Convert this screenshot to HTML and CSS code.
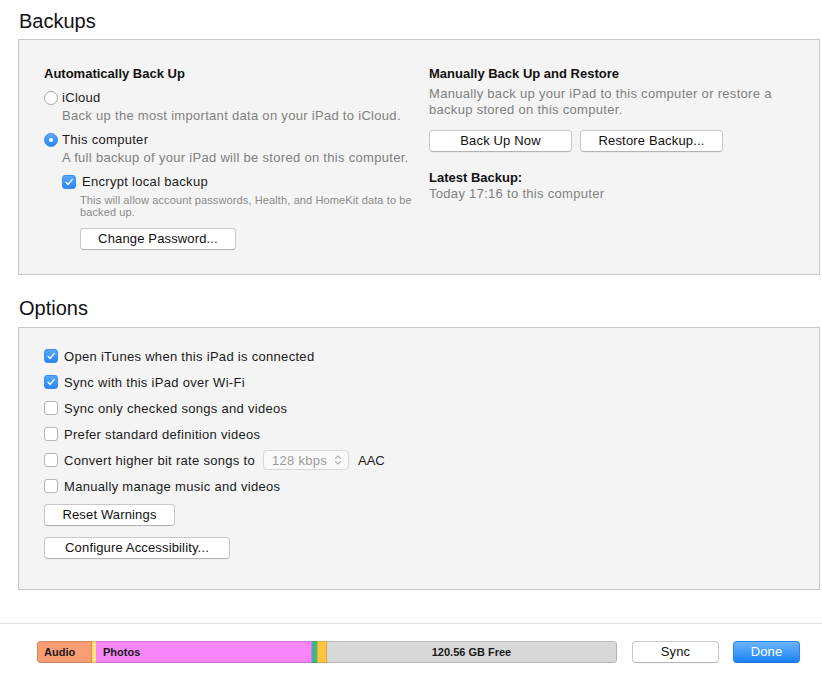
FILE: index.html
```html
<!DOCTYPE html>
<html>
<head>
<meta charset="utf-8">
<link rel="stylesheet" href="styles.css">
</head>
<body>
<div class="page">
  <h2 class="title title-first">Backups</h2>
  <div class="box box-backups">
    <div class="col col-left">
      <div class="bold">Automatically Back Up</div>
      <div class="radio-row">
        <span class="radio"></span><span>iCloud</span>
      </div>
      <div class="desc">Back up the most important data on your iPad to iCloud.</div>
      <div class="radio-row gap">
        <span class="radio on"></span><span>This computer</span>
      </div>
      <div class="desc">A full backup of your iPad will be stored on this computer.</div>
      <div class="sub">
        <div class="check-row">
          <span class="check on"><svg viewBox="0 0 14 14" width="14" height="14"><path d="M3.6 7.4 L6 9.8 L10.6 4.2" fill="none" stroke="#fff" stroke-width="1.6" stroke-linecap="round" stroke-linejoin="round"/></svg></span>
          <span>Encrypt local backup</span>
        </div>
        <div class="small">This will allow account passwords, Health, and HomeKit data to be backed up.</div>
        <button class="btn btn-change">Change Password...</button>
      </div>
    </div>
    <div class="col col-right">
      <div class="bold">Manually Back Up and Restore</div>
      <div class="gray para">Manually back up your iPad to this computer or restore a backup stored on this computer.</div>
      <div class="btn-row">
        <button class="btn btn-wide">Back Up Now</button>
        <button class="btn btn-wide">Restore Backup...</button>
      </div>
      <div class="bold latest">Latest Backup:</div>
      <div class="gray line16">Today 17:16 to this computer</div>
    </div>
  </div>

  <h2 class="title title-second">Options</h2>
  <div class="box box-options">
    <div class="opt"><span class="check on"><svg viewBox="0 0 14 14" width="14" height="14"><path d="M3.6 7.4 L6 9.8 L10.6 4.2" fill="none" stroke="#fff" stroke-width="1.6" stroke-linecap="round" stroke-linejoin="round"/></svg></span><span>Open iTunes when this iPad is connected</span></div>
    <div class="opt"><span class="check on"><svg viewBox="0 0 14 14" width="14" height="14"><path d="M3.6 7.4 L6 9.8 L10.6 4.2" fill="none" stroke="#fff" stroke-width="1.6" stroke-linecap="round" stroke-linejoin="round"/></svg></span><span>Sync with this iPad over Wi-Fi</span></div>
    <div class="opt"><span class="check"></span><span>Sync only checked songs and videos</span></div>
    <div class="opt"><span class="check"></span><span>Prefer standard definition videos</span></div>
    <div class="opt"><span class="check"></span><span>Convert higher bit rate songs to</span>
      <span class="popup"><span>128 kbps</span><svg class="updown" viewBox="0 0 8 12" width="8" height="12"><path d="M1.5 4.5 L4 2 L6.5 4.5 M1.5 7.5 L4 10 L6.5 7.5" fill="none" stroke="#b0b0b0" stroke-width="1.1" stroke-linecap="round" stroke-linejoin="round"/></svg></span>
      <span class="aac">AAC</span></div>
    <div class="opt"><span class="check"></span><span>Manually manage music and videos</span></div>
    <button class="btn btn-reset">Reset Warnings</button>
    <button class="btn btn-config">Configure Accessibility...</button>
  </div>

  <div class="footer">
    <div class="storage">
      <div class="seg seg-audio">Audio</div>
      <div class="seg seg-y1"></div>
      <div class="seg seg-photos">Photos</div>
      <div class="seg seg-green"></div>
      <div class="seg seg-orange"></div>
      <div class="seg seg-free">120.56 GB Free</div>
    </div>
    <button class="btn btn-sync">Sync</button>
    <button class="btn btn-done">Done</button>
  </div>
</div>
</body>
</html>
```

FILE: styles.css
```css
* { box-sizing: border-box; }
html, body {
  margin: 0;
  padding: 0;
  background: #ffffff;
}
body {
  font-family: "Liberation Sans", Arial, sans-serif;
  font-size: 13px;
  letter-spacing: 0.3px;
  color: #1a1a1a;
  width: 822px;
  height: 675px;
  overflow: hidden;
}
.page {
  display: flex;
  flex-direction: column;
}
.title {
  font-size: 20px;
  font-weight: normal;
  letter-spacing: 0;
  margin: 0 0 0 19px;
  line-height: 24px;
  color: #111;
}
.title-first { margin-top: 9px; height: 30px; }
.title-second { margin-top: 21px; height: 31px; }
.box {
  margin-left: 18px;
  width: 802px;
  background: #f4f4f4;
  border: 1px solid #c6c6c6;
}
.box-backups {
  height: 236px;
  display: flex;
  padding: 25px 0 0 25px;
}
.col-left { width: 385px; }
.col-right { width: 380px; }
.bold {
  font-weight: bold;
  letter-spacing: 0;
  line-height: 18px;
  color: #111;
}
.radio-row, .check-row {
  display: flex;
  align-items: center;
  line-height: 18px;
  margin-top: 6px;
}
.radio {
  width: 14px;
  height: 14px;
  border-radius: 50%;
  border: 1px solid #a8a8a8;
  background: #fff;
  margin-right: 4px;
  position: relative;
  flex: none;
}
.radio.on {
  background: linear-gradient(#5aa8fb, #2a86f5);
  border-color: #3a8ef0;
}
.radio.on::after {
  content: "";
  position: absolute;
  width: 4px;
  height: 4px;
  border-radius: 50%;
  background: #fff;
  left: 4px;
  top: 4px;
}
.desc {
  color: #808080;
  line-height: 18px;
  padding-left: 18px;
}
.sub {
  padding-left: 18px;
}
.check {
  width: 14px;
  height: 14px;
  border-radius: 3px;
  border: 1px solid #b5b5b5;
  background: #fff;
  margin-right: 6px;
  flex: none;
  display: inline-flex;
  align-items: center;
  justify-content: center;
  overflow: hidden;
}
.check svg { display: block; }
.check.on {
  background: linear-gradient(#5aa8fb, #2a86f5);
  border-color: #3a8ef0;
}
.small {
  font-size: 11px;
  letter-spacing: 0.12px;
  line-height: 12px;
  color: #8a8a8a;
  margin-top: 3px;
  padding-left: 18px;
  width: 352px;
}
.btn {
  font-family: "Liberation Sans", Arial, sans-serif;
  font-size: 13px;
  letter-spacing: 0.15px;
  color: #111;
  background: #ffffff;
  border: 1px solid #c8c8c8;
  border-bottom-color: #b4b4b4;
  border-radius: 4px;
  height: 22px;
  padding: 0;
  line-height: 20px;
  box-shadow: 0 0.5px 0.5px rgba(0,0,0,0.06);
}
.btn-change {
  width: 156px;
  margin-left: 18px;
  margin-top: 10px;
}
.gray { color: #808080; }
.para {
  line-height: 16px;
  margin-top: 3px;
  width: 375px;
}
.btn-row {
  display: flex;
  gap: 8px;
  margin-top: 12px;
}
.btn-wide { width: 143px; }
.latest { line-height: 16px; margin-top: 18px; }
.line16 { line-height: 16px; }

.box-options {
  height: 263px;
  display: flex;
  flex-direction: column;
  align-items: flex-start;
  padding: 15px 0 0 25px;
}
.opt {
  display: flex;
  align-items: center;
  height: 26px;
}
.opt .check { margin-right: 6px; }
.popup {
  display: inline-flex;
  align-items: center;
  justify-content: space-between;
  width: 86px;
  height: 20px;
  margin-left: 8px;
  padding: 0 6px 0 8px;
  border: 1px solid #d8d8d8;
  border-radius: 4px;
  background: #f9f9f9;
  color: #9a9a9a;
}
.updown { display: block; }
.aac { margin-left: 9px; letter-spacing: 0; }
.btn-reset { width: 131px; margin-top: 5px; }
.btn-config { width: 186px; margin-top: 11px; }

.footer {
  margin-top: 33px;
  border-top: 1px solid #e2e2e2;
  height: 52px;
  display: flex;
  align-items: flex-start;
  padding: 17px 0 0 37px;
}
.storage {
  display: flex;
  width: 580px;
  height: 22px;
  border-radius: 3px;
  overflow: hidden;
  font-size: 11px;
  font-weight: bold;
  letter-spacing: 0;
  color: #1a1a1a;
}
.seg {
  height: 100%;
  line-height: 20px;
  border-top: 1px solid rgba(0,0,0,0.12);
  border-bottom: 1px solid rgba(0,0,0,0.16);
}
.seg-audio {
  width: 55px;
  background: #fa9d73;
  padding-left: 6px;
  border-left: 1px solid rgba(0,0,0,0.15);
  border-right: 1px solid rgba(0,0,0,0.12);
  border-radius: 3px 0 0 3px;
}
.seg-y1 { width: 4px; background: #fde57a; }
.seg-photos {
  width: 216px;
  background: #f886f8;
  padding-left: 7px;
  border-right: 1px solid rgba(0,0,0,0.12);
}
.seg-green { width: 5px; background: #3bb98a; }
.seg-orange {
  width: 10px;
  background: #fdc43f;
  border-left: 1px solid rgba(0,0,0,0.1);
  border-right: 1px solid rgba(0,0,0,0.14);
}
.seg-free {
  flex: 1;
  background: #d8d8d8;
  text-align: center;
  border-right: 1px solid rgba(0,0,0,0.18);
  border-radius: 0 3px 3px 0;
}
.btn-sync { width: 87px; margin-left: 15px; }
.btn-done {
  width: 67px;
  margin-left: 14px;
  color: #fff;
  background: linear-gradient(#6cb4fb, #1a82f5);
  border: 1px solid #2c82e8;
  border-bottom-color: #1e6fd6;
}
```
